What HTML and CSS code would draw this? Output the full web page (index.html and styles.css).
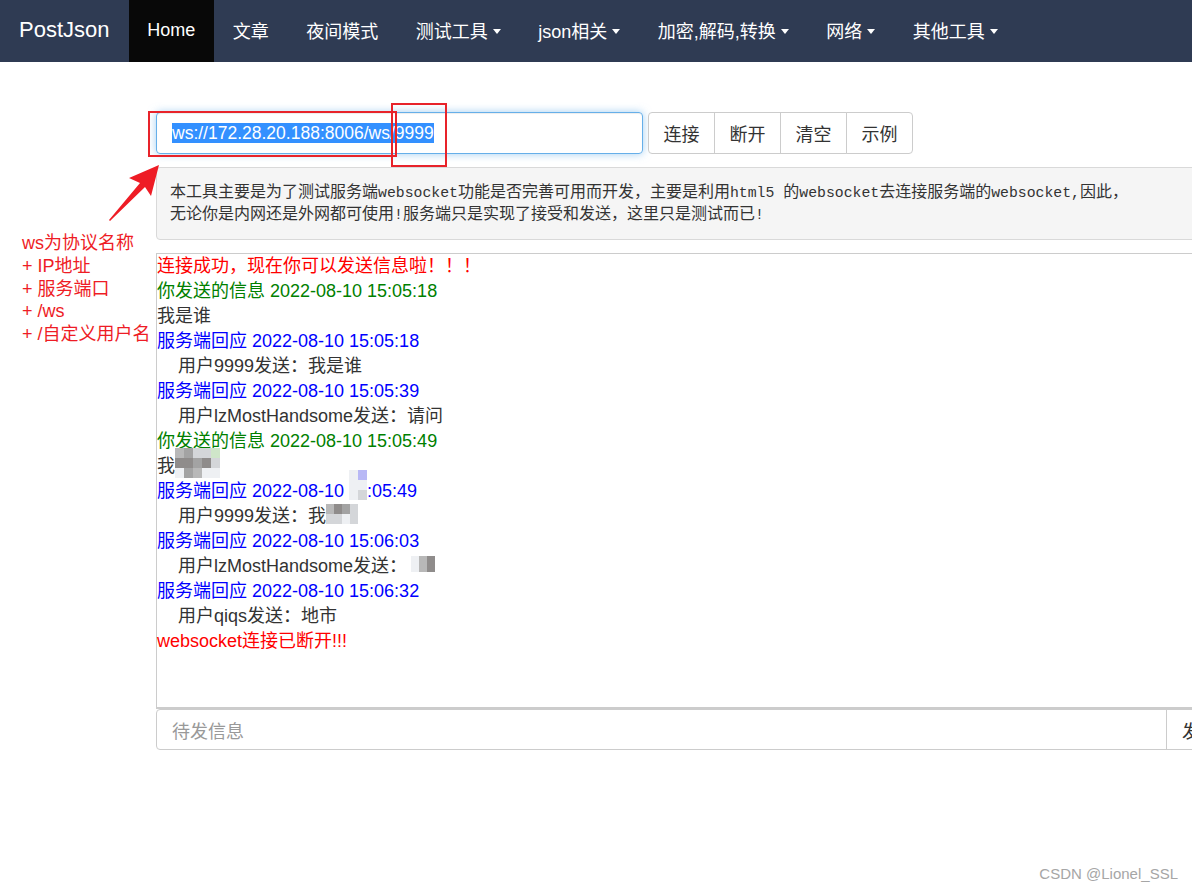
FILE: index.html
```html
<!DOCTYPE html>
<html lang="zh-CN">
<head>
<meta charset="utf-8">
<title>PostJson - WebSocket测试</title>
<link rel="stylesheet" href="styles.css">
</head>
<body>
<nav class="navbar">
  <a class="brand">PostJson</a>
  <ul class="nav">
    <li class="active"><a>Home</a></li>
    <li><a>文章</a></li>
    <li><a>夜间模式</a></li>
    <li><a>测试工具<span class="caret"></span></a></li>
    <li><a>json相关<span class="caret"></span></a></li>
    <li><a>加密,解码,转换<span class="caret"></span></a></li>
    <li><a>网络<span class="caret"></span></a></li>
    <li><a>其他工具<span class="caret"></span></a></li>
  </ul>
</nav>

<main class="main">
  <div class="conn-row">
    <div class="url-input"><span class="sel">ws://172.28.20.188:8006/ws/9999</span></div>
    <div class="btn-group">
      <button class="btn">连接</button>
      <button class="btn">断开</button>
      <button class="btn">清空</button>
      <button class="btn">示例</button>
    </div>
  </div>

  <div class="well">
    <p>本工具主要是为了测试服务端<span class="mono">websocket</span>功能是否完善可用而开发，主要是利用<span class="mono">html5 </span>的<span class="mono">websocket</span>去连接服务端的<span class="mono">websocket,</span>因此，</p>
    <p>无论你是内网还是外网都可使用<span class="mono">!</span>服务端只是实现了接受和发送，这里只是测试而已<span class="mono">!</span></p>
  </div>

  <div class="log">
    <div class="red">连接成功，现在你可以发送信息啦！！！</div>
    <div class="green">你发送的信息 2022-08-10 15:05:18</div>
    <div>我是谁</div>
    <div class="blue">服务端回应 2022-08-10 15:05:18</div>
    <div class="ind">用户9999发送：我是谁</div>
    <div class="blue">服务端回应 2022-08-10 15:05:39</div>
    <div class="ind">用户lzMostHandsome发送：请问</div>
    <div class="green">你发送的信息 2022-08-10 15:05:49</div>
    <div>我<span class="mosaic m1"><i class="g2"></i><i class="g3"></i><i class="g1"></i><i class="g1"></i><i class="gg"></i><i class="g4"></i><i class="g4"></i><i class="g3"></i><i class="g4"></i><i class="g1"></i><i class="g0"></i><i class="g3"></i><i class="g2"></i><i class="g0"></i><i class="g0"></i></span></div>
    <div class="blue">服务端回应 2022-08-10 <span class="mosaic m2"><i class="g0"></i><i class="gb"></i><i class="g0"></i><i class="g0"></i><i class="g0"></i><i class="g1"></i></span>:05:49</div>
    <div class="ind">用户9999发送：我<span class="mosaic m3"><i class="g2"></i><i class="g4"></i><i class="g3"></i><i class="g1"></i><i class="g1"></i><i class="g1"></i><i class="g0"></i><i class="g1"></i></span></div>
    <div class="blue">服务端回应 2022-08-10 15:06:03</div>
    <div class="ind">用户lzMostHandsome发送：<span class="mosaic m4"><i class="g0"></i><i class="g2"></i><i class="g4"></i><i class="g0"></i><i class="g2"></i><i class="g4"></i></span></div>
    <div class="blue">服务端回应 2022-08-10 15:06:32</div>
    <div class="ind">用户qiqs发送：地市</div>
    <div class="red">websocket连接已断开!!!</div>
  </div>

  <div class="send-row">
    <div class="send-input">待发信息</div>
    <button class="send-btn">发送</button>
  </div>
</main>

<div class="note">
  <div>ws为协议名称</div>
  <div>+ IP地址</div>
  <div>+ 服务端口</div>
  <div>+ /ws</div>
  <div>+ /自定义用户名</div>
</div>
<div class="mark mark-url"></div>
<div class="mark mark-user"></div>
<svg class="arrow" width="70" height="70" viewBox="0 0 70 70">
  <polygon points="52,0 44,31 38,22 3,56 2,55 33,18 22,13" fill="#ee1c25"/>
</svg>

<div class="watermark">CSDN @Lionel_SSL</div>
</body>
</html>
```

FILE: styles.css
```css
* { box-sizing: border-box; }
html, body { margin: 0; padding: 0; }
body {
  width: 1192px;
  height: 890px;
  overflow: hidden;
  position: relative;
  background: #fff;
  font-family: "Liberation Sans", "Noto Sans CJK SC", sans-serif;
  color: #333;
}

/* navbar */
.navbar {
  height: 62px;
  background: #2f3b53;
  display: flex;
  align-items: stretch;
}
.brand {
  display: flex;
  align-items: center;
  padding: 0 19px 2px;
  color: #fff;
  font-size: 22px;
}
.nav {
  list-style: none;
  margin: 0;
  padding: 0;
  display: flex;
}
.nav li { display: flex; }
.nav a {
  display: flex;
  align-items: center;
  padding: 0 18.75px 2px;
  color: #fff;
  font-size: 18px;
}
.nav li.active a { background: #080808; }
.caret {
  display: inline-block;
  width: 0;
  height: 0;
  margin-left: 5px;
  margin-top: 2px;
  border-top: 5px solid #fff;
  border-left: 4.5px solid transparent;
  border-right: 4.5px solid transparent;
}

/* main */
.main {
  margin-left: 156px;
  width: 1100px;
  padding-top: 50px;
}
.conn-row {
  display: flex;
  gap: 5px;
}
.url-input {
  width: 487px;
  height: 42px;
  border: 1px solid #66afe9;
  border-radius: 4px;
  box-shadow: inset 0 1px 1px rgba(0,0,0,.075), 0 0 8px rgba(102,175,233,.6);
  display: flex;
  align-items: center;
  padding-left: 15px;
  font-size: 17.5px;
}
.sel {
  background: #3390ff;
  color: #fff;
  line-height: 20px;
}
.btn-group { display: flex; }
.btn {
  height: 42px;
  padding: 0 14.5px;
  margin: 0 0 0 -1px;
  border: 1px solid #ccc;
  background: #fff;
  color: #333;
  font-family: inherit;
  font-size: 18px;
  border-radius: 0;
}
.btn:first-child { margin-left: 0; border-radius: 4px 0 0 4px; }
.btn:last-child { border-radius: 0 4px 4px 0; }

.well {
  margin-top: 13px;
  background: #f5f5f5;
  border: 1px solid #d9d9d9;
  border-radius: 4px;
  padding: 13px 13px 14px;
  font-size: 16px;
  line-height: 22px;
  color: #333;
}
.well p { margin: 0; height: 22px; }
.mono {
  font-family: "Liberation Mono", monospace;
  font-size: 14.8px;
  line-height: 1;
}

.log {
  margin-top: 13px;
  height: 456px;
  border: 1px solid #ccc;
  border-bottom: 2px solid #ccc;
  font-size: 18px;
  line-height: 25px;
  color: #333;
  padding: 0;
}
.log > div { height: 25px; }
.log .red { color: #f00; }
.log .green { color: #008000; }
.log .blue { color: #00f; }
.log .ind { padding-left: 21px; }

.mosaic {
  display: inline-grid;
  vertical-align: middle;
  margin-top: -6px;
}
.mosaic i { display: block; width: 9px; height: 10px; }
.m1 { grid-template-columns: repeat(5, 9px); margin-top: -8px; }
.m2 { grid-template-columns: repeat(2, 9px); margin-top: -14px; }
.m3 { grid-template-columns: repeat(4, 8px); }
.m3 i { width: 8px; }
.m4 { grid-template-columns: repeat(3, 8px); margin-left: 4px; }
.m4 i { width: 8px; height: 8px; }
.g0 { background: #eef0f3; }
.g1 { background: #d4d6d9; }
.g2 { background: #b8b8b8; }
.g3 { background: #a3a3a3; }
.g4 { background: #8f8c8b; }
.gg { background: #cfe6c9; }
.gb { background: #b8b8f5; }

.send-row {
  display: flex;
}
.send-input {
  width: 1011px;
  height: 41px;
  border: 1px solid #ccc;
  border-radius: 4px 0 0 4px;
  display: flex;
  align-items: center;
  padding-left: 15px;
  font-size: 18px;
  color: #999;
}
.send-btn {
  height: 41px;
  margin-left: -1px;
  border: 1px solid #ccc;
  background: #fff;
  font-family: inherit;
  font-size: 18px;
  color: #333;
  padding: 0 15px;
}

/* annotations drawn over the screenshot */
.note {
  position: absolute;
  left: 22px;
  top: 232px;
  color: #ee1c25;
  font-size: 18px;
  line-height: 22.75px;
}
.mark {
  position: absolute;
  border: 2px solid #e8232a;
}
.mark-url { left: 148px; top: 111px; width: 249px; height: 46px; }
.mark-user { left: 391px; top: 103px; width: 56px; height: 64px; }
.arrow {
  position: absolute;
  left: 107px;
  top: 165px;
}

.watermark {
  position: absolute;
  right: 14px;
  bottom: 8px;
  color: #a6a6a6;
  font-size: 15px;
}
```
